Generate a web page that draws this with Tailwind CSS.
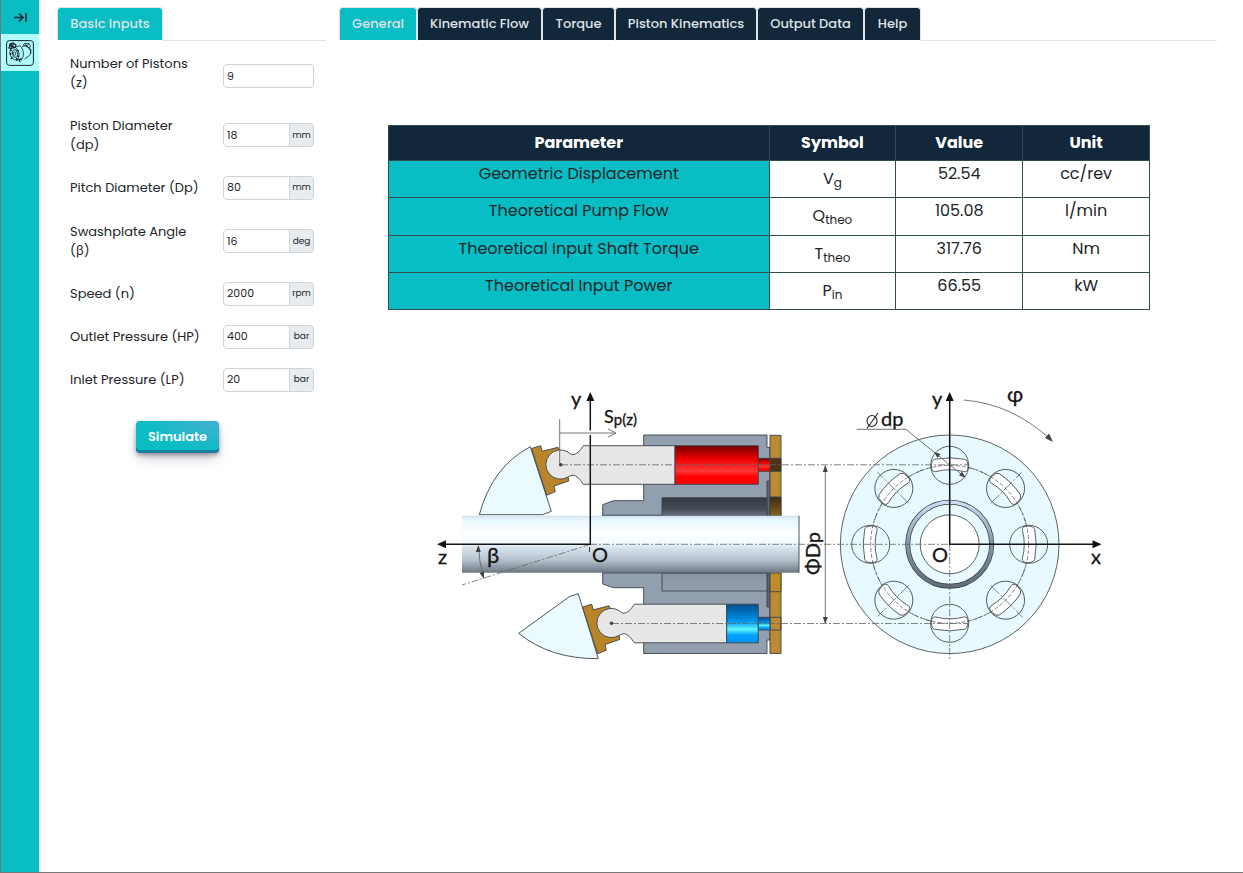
<!DOCTYPE html>
<html lang="en">
<head>
    <meta charset="UTF-8">
    <meta name="viewport" content="width=device-width, initial-scale=1.0">
    <title>Axial Piston Pump Simulation</title>
    <script src="https://cdn.jsdelivr.net/npm/@tailwindcss/browser@4"></script>
</head>
<body class="flex min-h-screen border-b border-l border-[#777] bg-white font-['Poppins','Inter',sans-serif] text-[#212529]">
    <!-- Sidebar -->
    <aside class="flex w-[38px] shrink-0 flex-col bg-[#08bdc3]">
        <button type="button" aria-label="Expand menu" class="flex h-[34px] items-center justify-center">
            <svg class="h-4 w-4" viewBox="0 0 16 16" fill="none" stroke="#12273a" stroke-width="1.6">
                <path d="M2 8.500h9M7 4.500l4 4-4 4M14 4v9"/>
            </svg>
        </button>
        <a href="#" aria-label="Axial piston pump" class="flex h-[37px] items-center justify-center bg-[#b0fcff]">
            <svg class="h-[26px] w-7" viewBox="0 0 28 26" fill="none" stroke="#10262b" stroke-width=".8">
                <rect x=".6" y=".6" width="26.8" height="24.8" rx="3" stroke-width="1"/>
                <ellipse cx="8.500" cy="13.500" rx="4.400" ry="6.500" transform="rotate(-15 8.500 13.500)"/>
                <ellipse cx="9" cy="13.500" rx="2.600" ry="4" transform="rotate(-15 9 13.500)"/>
                <ellipse cx="8.500" cy="13.500" rx="1.200" ry="1.800"/>
                <path d="M9 7l5-1.200c3 2 4.500 8 2.500 12.500L11 20M16 6.500l4-1 4 3c1 2 1 5-.5 7l-5 3.500"/>
                <path d="M3 8l1-4 3-1 3 2-1 2.500-4 1zM4 5l4 2M5 3.500l1 4M8 4L4.500 7" stroke-width="1.200"/>
                <path d="M17 5l2-1.800 4 .3 1.500 2.500-1 2-4-2zM19 4l3 3M23 4l-3 2"/>
                <path d="M4 9.500l2 1M3.500 14l2-.5M5 19l1.500-2M11 21l-.5-3M13 17l-2-1.500M12.500 10l-2 1M13 19l1 3M14 19l2 1" stroke-width="1.300"/>
                <path d="M24.800 9v5M22 7l2 3"/>
            </svg>
        </a>
    </aside>

    <!-- Inputs -->
    <section class="ml-[18px] w-[269px] shrink-0 pt-[7px]">
        <nav class="flex h-[34px] border-b border-[#dee2e6]">
            <button type="button" class="-mb-px h-[34px] w-[106px] rounded-t border border-[#dee2e6] border-b-white bg-[#08bdc3] text-[13px] font-medium text-[#dee2e6]">Basic Inputs</button>
        </nav>
        <form>
            <div class="pr-3 pl-[13px] pt-px text-[13px] leading-[19px]">
                <div class="flex items-center justify-between">
                    <label for="pistons" class="py-3">Number of Pistons<br>(z)</label>
                    <input id="pistons" type="text" value="9" class="mt-1.5 h-6 w-[91px] rounded-sm border border-[#ced4da] px-[3px] text-[11px]">
                </div>
                <div class="flex items-center justify-between">
                    <label for="piston-diameter" class="py-3">Piston Diameter<br>(dp)</label>
                    <div class="flex h-6 w-[91px]">
                        <input id="piston-diameter" type="text" value="18" class="w-[67px] rounded-l-sm border border-[#ced4da] px-[3px] text-[11px]">
                        <span class="-ml-px flex w-[25px] items-center justify-center rounded-r-sm border border-[#ced4da] bg-[#e9ecef] text-[9px]">mm</span>
                    </div>
                </div>
                <div class="flex items-center justify-between">
                    <label for="pitch-diameter" class="py-3">Pitch Diameter (Dp)</label>
                    <div class="flex h-6 w-[91px]">
                        <input id="pitch-diameter" type="text" value="80" class="w-[67px] rounded-l-sm border border-[#ced4da] px-[3px] text-[11px]">
                        <span class="-ml-px flex w-[25px] items-center justify-center rounded-r-sm border border-[#ced4da] bg-[#e9ecef] text-[9px]">mm</span>
                    </div>
                </div>
                <div class="flex items-center justify-between pt-px">
                    <label for="angle" class="py-3">Swashplate Angle<br>(β)</label>
                    <div class="flex h-6 w-[91px]">
                        <input id="angle" type="text" value="16" class="w-[67px] rounded-l-sm border border-[#ced4da] px-[3px] text-[11px]">
                        <span class="-ml-px flex w-[25px] items-center justify-center rounded-r-sm border border-[#ced4da] bg-[#e9ecef] text-[9px]">deg</span>
                    </div>
                </div>
                <div class="flex items-center justify-between">
                    <label for="speed" class="py-3">Speed (n)</label>
                    <div class="flex h-6 w-[91px]">
                        <input id="speed" type="text" value="2000" class="w-[67px] rounded-l-sm border border-[#ced4da] px-[3px] text-[11px]">
                        <span class="-ml-px flex w-[25px] items-center justify-center rounded-r-sm border border-[#ced4da] bg-[#e9ecef] text-[9px]">rpm</span>
                    </div>
                </div>
                <div class="flex items-center justify-between">
                    <label for="outlet" class="py-3">Outlet Pressure (HP)</label>
                    <div class="flex h-6 w-[91px]">
                        <input id="outlet" type="text" value="400" class="w-[67px] rounded-l-sm border border-[#ced4da] px-[3px] text-[11px]">
                        <span class="-ml-px flex w-[25px] items-center justify-center rounded-r-sm border border-[#ced4da] bg-[#e9ecef] text-[9px]">bar</span>
                    </div>
                </div>
                <div class="flex items-center justify-between">
                    <label for="inlet" class="py-3">Inlet Pressure (LP)</label>
                    <div class="flex h-6 w-[91px]">
                        <input id="inlet" type="text" value="20" class="w-[67px] rounded-l-sm border border-[#ced4da] px-[3px] text-[11px]">
                        <span class="-ml-px flex w-[25px] items-center justify-center rounded-r-sm border border-[#ced4da] bg-[#e9ecef] text-[9px]">bar</span>
                    </div>
                </div>
            </div>
            <button type="button" class="mt-5 ml-[79px] h-8 w-[83px] rounded bg-[radial-gradient(100%_100%_at_100%_0%,#45b0d0_0%,#08bdc3_100%)] text-[13px] font-semibold text-white shadow-[0_2px_4px_rgba(45,35,66,0.4),0_7px_13px_-3px_rgba(45,35,66,0.3),inset_0_-3px_0_#1a7f9c]">Simulate</button>
        </form>
    </section>

    <!-- Results -->
    <main class="mr-[26px] ml-[13px] min-w-0 flex-1 pt-[7px]">
        <nav class="flex h-[34px] border-b border-[#dee2e6] text-[13px] font-medium whitespace-nowrap text-[#dee2e6]">
            <button type="button" class="-mb-px h-[34px] w-[78px] rounded-t border border-[#dee2e6] border-b-white bg-[#08bdc3]">General</button>
            <button type="button" class="-mb-px h-[34px] w-[125px] rounded-t border border-[#dee2e6] border-b-white bg-[#12273a]">Kinematic Flow</button>
            <button type="button" class="-mb-px h-[34px] w-[73px] rounded-t border border-[#dee2e6] border-b-white bg-[#12273a]">Torque</button>
            <button type="button" class="-mb-px h-[34px] w-[142px] rounded-t border border-[#dee2e6] border-b-white bg-[#12273a]">Piston Kinematics</button>
            <button type="button" class="-mb-px h-[34px] w-[107px] rounded-t border border-[#dee2e6] border-b-white bg-[#12273a]">Output Data</button>
            <button type="button" class="-mb-px h-[34px] w-[57px] rounded-t border border-[#dee2e6] border-b-white bg-[#12273a]">Help</button>
        </nav>

        <div class="pt-[84px] pr-[67px] pl-[49px]">
            <table class="w-full table-fixed border-collapse text-center text-base leading-6">
                <thead class="bg-[#12273a] text-white">
                    <tr class="h-[35px]">
                        <th class="w-1/2 border border-[#2f4f4f] font-bold">Parameter</th>
                        <th class="w-1/6 border border-[#2f4f4f] font-bold">Symbol</th>
                        <th class="w-1/6 border border-[#2f4f4f] font-bold">Value</th>
                        <th class="w-1/6 border border-[#2f4f4f] font-bold">Unit</th>
                    </tr>
                </thead>
                <tbody class="align-top">
                    <tr class="h-[37px]">
                        <td class="border border-[#2f4f4f] bg-[#08bdc3] pt-px">Geometric Displacement</td>
                        <td class="border border-[#2f4f4f] pt-1.5">V<sub>g</sub></td>
                        <td class="border border-[#2f4f4f] pt-px">52.54</td>
                        <td class="border border-[#2f4f4f] pt-px">cc/rev</td>
                    </tr>
                    <tr class="h-[38px]">
                        <td class="border border-[#2f4f4f] bg-[#08bdc3] pt-px">Theoretical Pump Flow</td>
                        <td class="border border-[#2f4f4f] pt-1.5">Q<sub>theo</sub></td>
                        <td class="border border-[#2f4f4f] pt-px">105.08</td>
                        <td class="border border-[#2f4f4f] pt-px">l/min</td>
                    </tr>
                    <tr class="h-[37px]">
                        <td class="border border-[#2f4f4f] bg-[#08bdc3] pt-px">Theoretical Input Shaft Torque</td>
                        <td class="border border-[#2f4f4f] pt-1.5">T<sub>theo</sub></td>
                        <td class="border border-[#2f4f4f] pt-px">317.76</td>
                        <td class="border border-[#2f4f4f] pt-px">Nm</td>
                    </tr>
                    <tr class="h-[37px]">
                        <td class="border border-[#2f4f4f] bg-[#08bdc3] pt-px">Theoretical Input Power</td>
                        <td class="border border-[#2f4f4f] pt-1.5">P<sub>in</sub></td>
                        <td class="border border-[#2f4f4f] pt-px">66.55</td>
                        <td class="border border-[#2f4f4f] pt-px">kW</td>
                    </tr>
                </tbody>
            </table>

            <!-- Pump section and valve plate -->
            <svg class="mx-auto mt-[70px] w-full max-w-[681px] font-['Lato',sans-serif]" viewBox="429 380 681 290" role="img" aria-label="Axial piston pump geometry">
                <defs>
                    <linearGradient id="shaft" x2="0" y2="1">
                        <stop offset="0" stop-color="#cfe0f2"/>
                        <stop offset=".06" stop-color="#e6f5ff"/>
                        <stop offset=".3" stop-color="#fbffff"/>
                        <stop offset=".48" stop-color="#f2faff"/>
                        <stop offset=".55" stop-color="#d9e6f0"/>
                        <stop offset=".78" stop-color="#b5c1cd"/>
                        <stop offset="1" stop-color="#6c7783"/>
                    </linearGradient>
                    <linearGradient id="red" x2="0" y2="1">
                        <stop offset="0" stop-color="#700"/>
                        <stop offset=".35" stop-color="#f00000"/>
                        <stop offset=".65" stop-color="#ff3838"/>
                        <stop offset=".8" stop-color="#f00"/>
                        <stop offset="1" stop-color="#f00"/>
                    </linearGradient>
                    <linearGradient id="blue" x2="0" y2="1">
                        <stop offset="0" stop-color="#004e8c"/>
                        <stop offset=".45" stop-color="#0097f0"/>
                        <stop offset=".65" stop-color="#5ff5ff"/>
                        <stop offset=".8" stop-color="#00a2ff"/>
                        <stop offset="1" stop-color="#0092f8"/>
                    </linearGradient>
                    <linearGradient id="bore" x2="0" y2="1">
                        <stop offset="0" stop-color="#343b42"/>
                        <stop offset=".6" stop-color="#434b54"/>
                        <stop offset="1" stop-color="#68737f"/>
                    </linearGradient>
                    <linearGradient id="lowbore" x2="0" y2="1">
                        <stop offset="0" stop-color="#8995a5"/>
                        <stop offset="1" stop-color="#929fae"/>
                    </linearGradient>
                    <linearGradient id="shade" x2="0" y2="1">
                        <stop offset="0" stop-color="#3d2a0c"/>
                        <stop offset="1" stop-color="#8a6220"/>
                    </linearGradient>
                    <linearGradient id="ring" x2="0" y2="1">
                        <stop offset="0" stop-color="#cfdcf5"/>
                        <stop offset=".5" stop-color="#8593a5"/>
                        <stop offset="1" stop-color="#626d79"/>
                    </linearGradient>
                    <g id="slipper">
                        <path d="M531.500 448.500l9.200-2.800 1.600 5.600 15.700-4 1.300 2.400L568.300 478l.4 3-14.700 5 1.300 5.700-8.600 3.600z" fill="#ba8428"/>
                    </g>
                    <g id="port">
                        <path d="M-15-85Q0-88 15-85Q18.300-84 18.300-78Q18.300-72 14-72.700Q0-76.500-14-72.700Q-18.300-72-18.300-78Q-18.300-84-15-85z" fill="#fff"/>
                        <circle cy="-79" r="19" fill="none"/>
                    </g>
                </defs>

                <g stroke="#3c444b" stroke-width=".9">
                    <path d="M530.300 446.700Q492 467 479.300 514.700H542.700L551.300 511.300z" fill="#eafaff"/>
                    <path d="M578.300 593.700l-9 3L518.700 633.300Q550 659 598.300 658.700z" fill="#eafaff"/>
                    <path d="M643.700 435H767v12.500h3V640h-3v13.500H643.700V587.700H613.300L602.700 584V504.700l10.600-4H643.700z" fill="#929fae"/>
                    <path d="M767 481h3v126h-3z" fill="#5e6874"/>
                    <path d="M662 497.700H767V516H662z" fill="url(#bore)"/>
                    <path d="M662 573H767V591H662z" fill="url(#lowbore)"/>
                    <path d="M770 435.300h11v218.200h-11z" fill="#bc8a32"/>
                    <path d="M770 458.300h11v13h-11z" fill="#463413"/>
                    <path d="M770 497h11v19h-11z" fill="url(#shade)"/>
                    <path d="M770 573h11v18.700h-11z" fill="#c18a2b"/>
                    <path d="M770 617.300h11v12.700h-11z" fill="none"/>

                    <use href="#slipper"/>
                    <use href="#slipper" x="51" y="158.500"/>
                    <path d="M675 445.700H583.300Q578 454.500 572.700 454.700Q570.500 454.700 568 452A14.600 14.600 0 1 0 568 477Q571 475 573.500 475.200Q578 476 583.300 484.300H675z" fill="#e7e7e7"/>
                    <path d="M726.700 604.200H634.300Q629 613 623.700 613.200Q621.500 613.200 619 610.500A14.600 14.600 0 1 0 619 635.500Q622 633.500 624.500 633.700Q629 634.500 634.300 642.800H726.700z" fill="#e7e7e7"/>
                    <path d="M675 445.700h83.300v38.600H675z" fill="url(#red)"/>
                    <path d="M758.300 458.300H770v13H758.300z" fill="url(#red)"/>
                    <path d="M726.700 604.200h31.600v38.600H726.700z" fill="url(#blue)"/>
                    <path d="M758.300 617.300H770V630H758.300z" fill="url(#blue)"/>
                </g>
                <path d="M462 515.700H799v57H462z" fill="url(#shaft)"/>
                <path d="M799 515.700v57M602.700 515.200H662M602.700 573H770" stroke="#4b545c" fill="none"/>

                <!-- Valve plate -->
                <g transform="translate(949.700 544.300)" stroke="#4a5055" stroke-width=".9">
                    <circle r="109.300" fill="#e8faff"/>
                    <circle r="79" fill="none" stroke-width=".7" stroke-dasharray="7 2 2 2"/>
                    <circle r="42" fill="none" stroke="#343a42" stroke-width="5"/>
                    <circle r="42" fill="none" stroke="url(#ring)" stroke-width="3.600"/>
                    <circle r="29.500" fill="#fff"/>
                    <use href="#port"/>
                    <use href="#port" transform="rotate(45)"/>
                    <use href="#port" transform="rotate(90)"/>
                    <use href="#port" transform="rotate(135)"/>
                    <use href="#port" transform="rotate(180)"/>
                    <use href="#port" transform="rotate(225)"/>
                    <use href="#port" transform="rotate(270)"/>
                    <use href="#port" transform="rotate(315)"/>
                    <circle r="79" fill="none" stroke-width=".7" stroke-dasharray="4 2"/>
                    <path d="M41-41L72-72M-41-41L-72-72M41 41L73 73M-41 41L-72 72" stroke-width=".7" stroke-dasharray="12 2 2 2"/>
                </g>

                <!-- Centre lines -->
                <g fill="none" stroke="#666" stroke-width=".8" stroke-dasharray="7 2 2 2">
                    <path d="M561 464.800H968M612 623.500H968M590 544.300H950M949.700 544V661"/>
                    <path d="M590 544.500L462 585"/>
                </g>

                <!-- Dimensions -->
                <g fill="none" stroke="#666" stroke-width=".9">
                    <path d="M559.700 419V464M560 433H615M608 429l8 4-8 4M825.300 466V623M478.500 546Q479 562 483.500 577"/>
                    <path d="M856.700 429.300H906L965 477.300M964 400Q1012 404 1050 439"/>
                </g>
                <g fill="#444">
                    <path d="M825.300 465l-2.500 7h5zM825.300 624l-2.500-7h5zM478.300 545l-2.500 7h5zM484 579l-4.500-6 4.500-1.500zM1053 442l-8-4 4-4.500zM934 452l6.500 2-3 4zM965.500 477.500l-6.500-2 3-4z"/>
                    <circle cx="560.700" cy="464.800" r="1.800"/>
                    <circle cx="611.500" cy="623.300" r="1.800"/>
                </g>

                <!-- Axes -->
                <g fill="none" stroke="#151515" stroke-width="1.500">
                    <path d="M590.300 400V430.500M590.300 435V544.300H444M949.700 400V544.300H1094"/>
                    <path d="M589.500 547v5" stroke-width=".8"/>
                </g>
                <path d="M590.300 392l-4 9h8zM949.700 392l-4 9h8zM437 544.300l9-4v8zM1101.500 544.300l-9-4v8z" fill="#111"/>

                <g class="fill-[#151515] stroke-[#151515] text-[20px]" stroke-width=".3">
                    <text x="571" y="406">y</text>
                    <text x="932" y="406">y</text>
                    <text x="438" y="564">z</text>
                    <text x="1091" y="564">x</text>
                    <text x="487" y="563" class="text-[22px]">β</text>
                    <text x="592" y="562">O</text>
                    <text x="932" y="562">O</text>
                    <text x="1007" y="402" class="text-[22px]">φ</text>
                    <text x="604" y="423" class="text-[18px]">S<tspan class="text-[15px]" dy="2">p(z)</tspan></text>
                    <text x="881" y="426">dp</text>
                    <text transform="translate(820 575) rotate(-90)">ΦDp</text>
                </g>
                <g fill="none" stroke="#222" stroke-width="1.100">
                    <ellipse cx="872" cy="421" rx="5" ry="5.500"/>
                    <path d="M867 428.500L878 413"/>
                </g>
            </svg>
        </div>
    </main>
</body>
</html>
